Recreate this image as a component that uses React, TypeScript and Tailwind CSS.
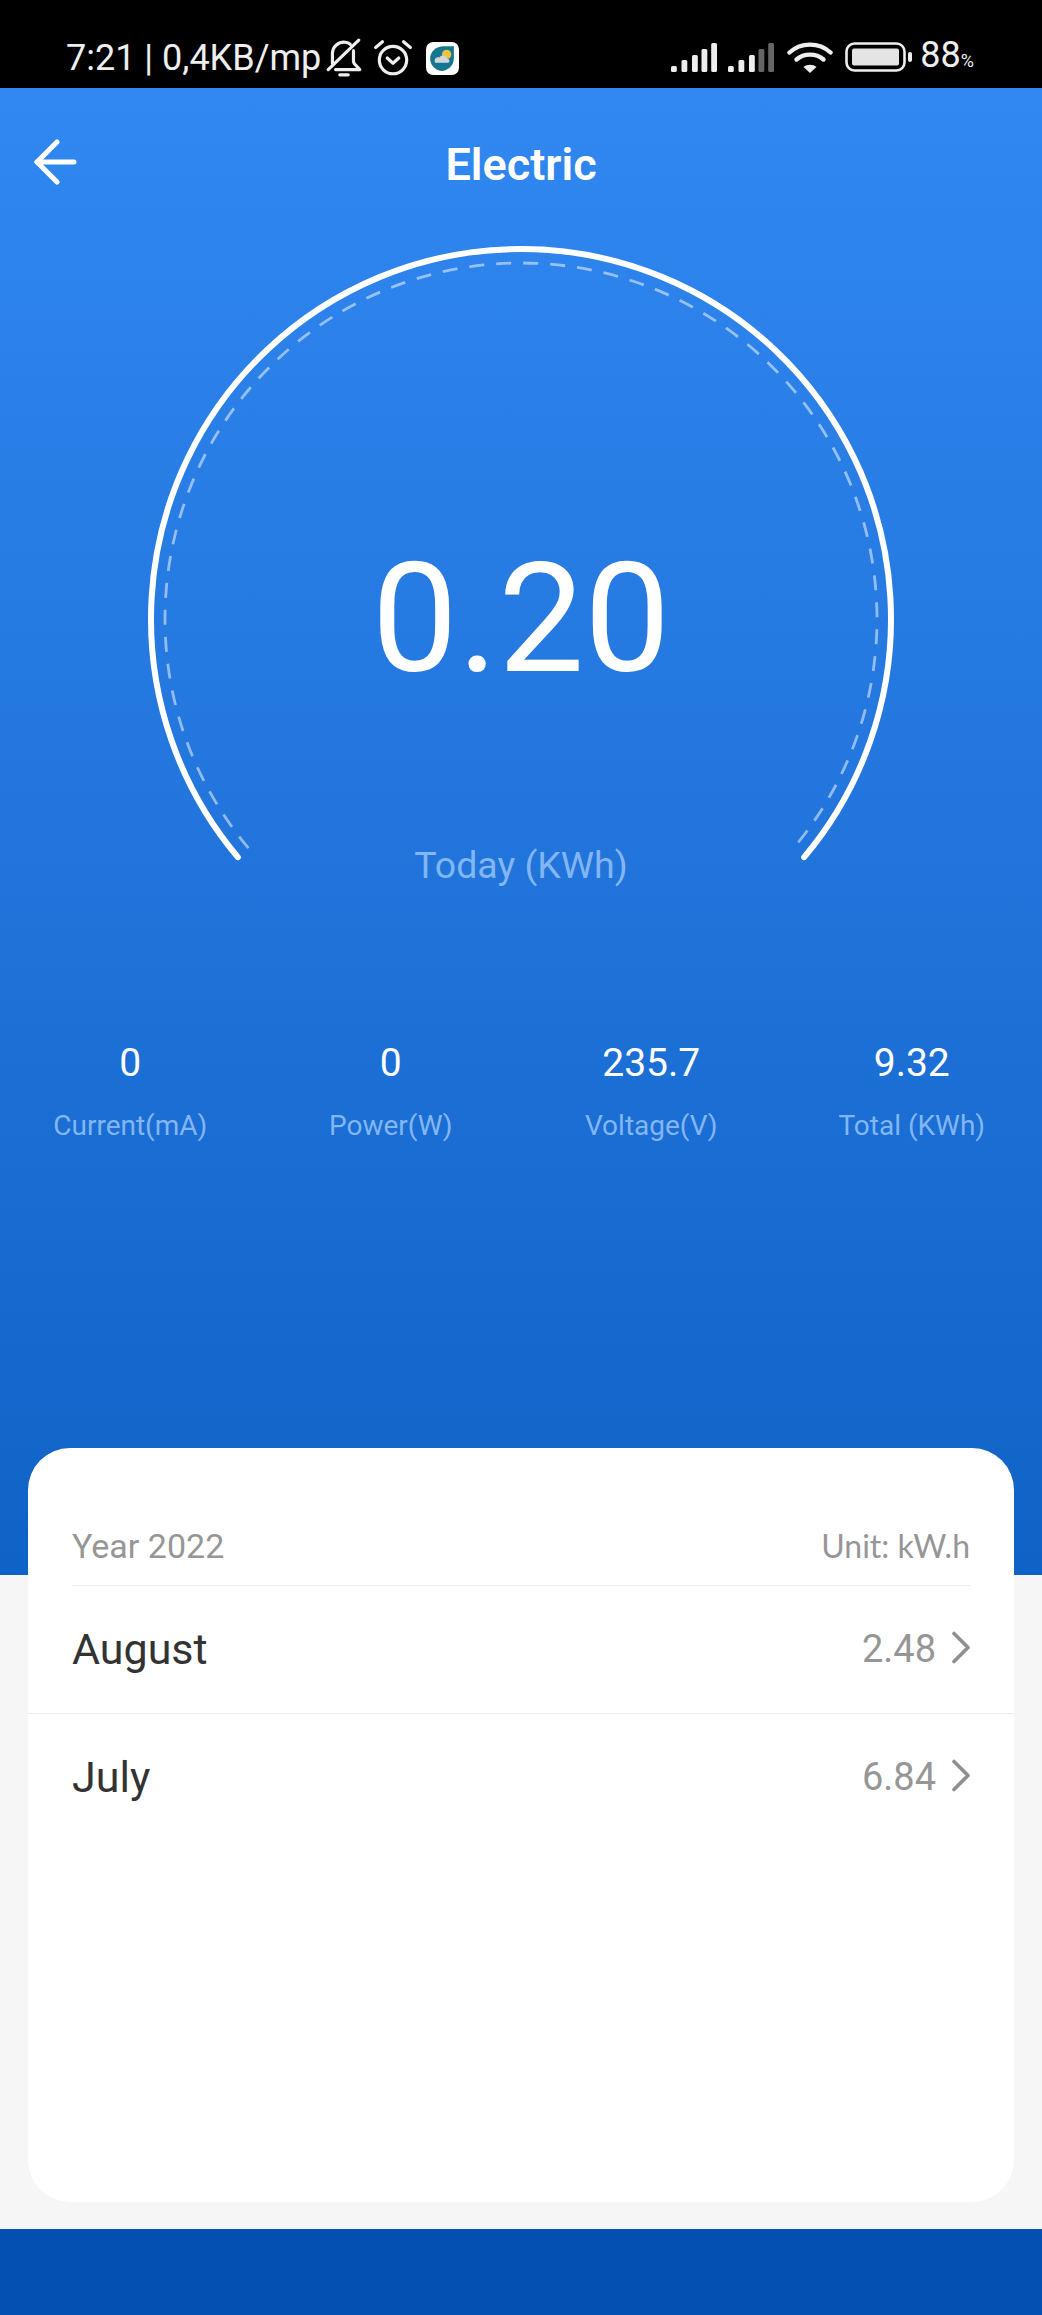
import React from "react";

function BellOff() {
  return (
    <svg width="36" height="40" viewBox="0 0 34 38" fill="none" stroke="#eee" strokeWidth="3" strokeLinecap="round" strokeLinejoin="round">
      <path d="M2 30 L31 2" />
      <path d="M6 24 V15 C6 8 12 3.5 18 4 C20 4.2 22 5 23 6" />
      <path d="M26 12 V22 C26 25 30 27 32 30 H9" />
      <path d="M13 35 H21" />
    </svg>
  );
}

function Alarm() {
  return (
    <svg width="40" height="40" viewBox="0 0 38 38" fill="none" stroke="#eee" strokeWidth="3" strokeLinecap="round" strokeLinejoin="round">
      <circle cx="19" cy="21" r="13" />
      <path d="M13.5 19 L19 24 L24.5 19" />
      <path d="M2.5 9 L9 3.5" />
      <path d="M35.5 9 L29 3.5" />
    </svg>
  );
}

function WeatherApp() {
  return (
    <svg width="33" height="33" viewBox="0 0 32 32">
      <rect width="32" height="32" rx="7" fill="#fff" />
      <path d="M4 16 C4 9 10 4 17 4 H27 V16 C27 23 21 28 15 28 C9 28 4 22 4 16 Z" fill="#17768f" />
      <circle cx="20" cy="12" r="4.5" fill="#e9c443" />
      <path d="M9 20 C7 17 10 14 13 15 C15 12 20 13 20 16 C23 16 24 20 21 20 Z" fill="#cfd6de" />
    </svg>
  );
}

function Signal({ dim }: { dim: number }) {
  const bars = [
    [0, 23, 6],
    [10.5, 17, 12],
    [21, 12, 17],
    [30.5, 6, 23],
    [40.2, 0, 29],
  ];
  return (
    <svg width="46" height="29" viewBox="0 0 46 29">
      {bars.map(([x, y, h], i) => (
        <rect key={i} x={x} y={y} width="5.8" height={h} rx="1.5" fill={i >= 5 - dim ? "#666" : "#eee"} />
      ))}
    </svg>
  );
}

function Wifi() {
  return (
    <svg width="46" height="33" viewBox="0 0 46 33" fill="none" stroke="#eee" strokeWidth="4.4" strokeLinecap="round">
      <path d="M2.5 11.5 C14 1 32 1 43.5 11.5" />
      <path d="M9.5 18.5 C17 12 29 12 36.5 18.5" />
      <path d="M23 32 L16.5 26 C20 23 26 23 29.5 26 Z" fill="#eee" stroke="none" />
    </svg>
  );
}

function Battery() {
  return (
    <svg width="68" height="30" viewBox="0 0 68 30" fill="none">
      <rect x="1.5" y="1.5" width="58" height="27" rx="8" stroke="#eee" strokeWidth="2.6" />
      <rect x="7" y="6.5" width="47" height="17" rx="2" fill="#e4e4e4" />
      <rect x="63" y="10" width="4" height="10" rx="2" fill="#eee" />
    </svg>
  );
}

function Gauge() {
  const cx = 371;
  const cy = 371;
  const a = (r: number) => {
    const dx = r * 0.7654;
    const dy = r * 0.6436;
    return `M ${cx - dx} ${cy + dy} A ${r} ${r} 0 1 1 ${cx + dx} ${cy + dy}`;
  };
  return (
    <svg className="absolute left-0 top-0 overflow-visible" width="742" height="640" viewBox="0 0 742 640" fill="none">
      <path d={a(356)} stroke="#ffffff" strokeOpacity="0.5" strokeWidth="2.8" strokeDasharray="15 12" />
      <path d={a(370)} stroke="#ffffff" strokeWidth="6" strokeLinecap="round" />
    </svg>
  );
}

function Stat({ value, label }: { value: string; label: string }) {
  return (
    <div className="flex w-[261px] flex-col items-center">
      <div className="h-[44px] text-[39px] leading-[44px] text-white">{value}</div>
      <div className="mt-[23px] text-[28px] leading-[36px] text-[#82b6f3]">{label}</div>
    </div>
  );
}

function Row({ name, value, full }: { name: string; value: string; full?: boolean }) {
  return (
    <div className={`flex h-[128px] items-center justify-between border-b pl-[44px] pr-[43px] ${full ? "border-[#ececec]" : "border-transparent"}`}>
      <span className="text-[43px] text-[#333333]">{name}</span>
      <span className="flex items-center gap-[15px] text-[38px] text-[#969696]">
        {value}
        <svg className="-mt-[3px]" width="20" height="34" viewBox="0 0 20 34" fill="none" stroke="#8f8f8f" strokeWidth="3.6" strokeLinecap="round" strokeLinejoin="round">
          <path d="M3 2.5 L17 16.5 L3 30.5" />
        </svg>
      </span>
    </div>
  );
}

export default function App() {
  return (
    <div className="flex h-[2315px] w-[1042px] flex-col overflow-hidden bg-[#f6f6f6] font-['Roboto',sans-serif]">
      <div className="flex h-[88px] shrink-0 items-end justify-between bg-black pb-[10px] pl-[66px] pr-[68px] text-[#eeeeee]">
        <div className="flex items-center">
          <span className="text-[36px] leading-[40px]">7:21 | 0,4KB/mp</span>
          <span className="ml-[5px] flex"><BellOff /></span>
          <span className="ml-[11px] flex"><Alarm /></span>
          <span className="ml-[13px] flex"><WeatherApp /></span>
        </div>
        <div className="-mb-[3px] flex items-center">
          <Signal dim={0} />
          <span className="ml-[11px] flex"><Signal dim={2} /></span>
          <span className="ml-[13px] flex"><Wifi /></span>
          <span className="ml-[12px] flex"><Battery /></span>
          <span className="ml-[7px] mt-[2px] text-[36px] leading-[40px]">88<span className="text-[18px]">%</span></span>
        </div>
      </div>

      <div className="h-[1487px] shrink-0 bg-gradient-to-b from-[#3188f1] to-[#0f62c6]">
        <div className="relative flex h-[104px] items-center justify-center">
          <svg className="absolute left-[34px] top-[51px]" width="44" height="46" viewBox="0 0 44 46" fill="none" stroke="#fff" strokeWidth="5" strokeLinecap="round" strokeLinejoin="round">
            <path d="M40 23 H3" />
            <path d="M23 3 L3 23 L23 43" />
          </svg>
          <span className="mt-[50px] text-[45px] font-semibold leading-[50px] text-white">Electric</span>
        </div>
        <div className="relative mx-auto mt-[56px] h-[640px] w-[742px]">
          <Gauge />
          <div className="absolute inset-x-0 top-[286px] text-center text-[153px] leading-[170px] text-white">0.20</div>
          <div className="absolute inset-x-0 top-[595px] text-center text-[37.5px] leading-[44px] text-[#82b6f3]">Today (KWh)</div>
        </div>
        <div className="mt-[153px] flex">
          <Stat value="0" label="Current(mA)" />
          <Stat value="0" label="Power(W)" />
          <Stat value="235.7" label="Voltage(V)" />
          <Stat value="9.32" label="Total (KWh)" />
        </div>
      </div>

      <div className="h-[654px] shrink-0 px-[28px]">
        <div className="relative -mt-[127px] h-[754px] rounded-[42px] bg-white">
          <div className="flex h-[138px] items-end">
            <div className="mx-[44px] flex flex-1 items-center justify-between border-b border-[#ececec] pb-[17px] text-[34px] leading-[44px] text-[#969696]">
              <span>Year 2022</span>
              <span className="font-['Lato',sans-serif] text-[32px]">Unit: kW.h</span>
            </div>
          </div>
          <Row name="August" value="2.48" full />
          <Row name="July" value="6.84" />
        </div>
      </div>

      <div className="flex-1 bg-[#0450b2]" />
    </div>
  );
}
